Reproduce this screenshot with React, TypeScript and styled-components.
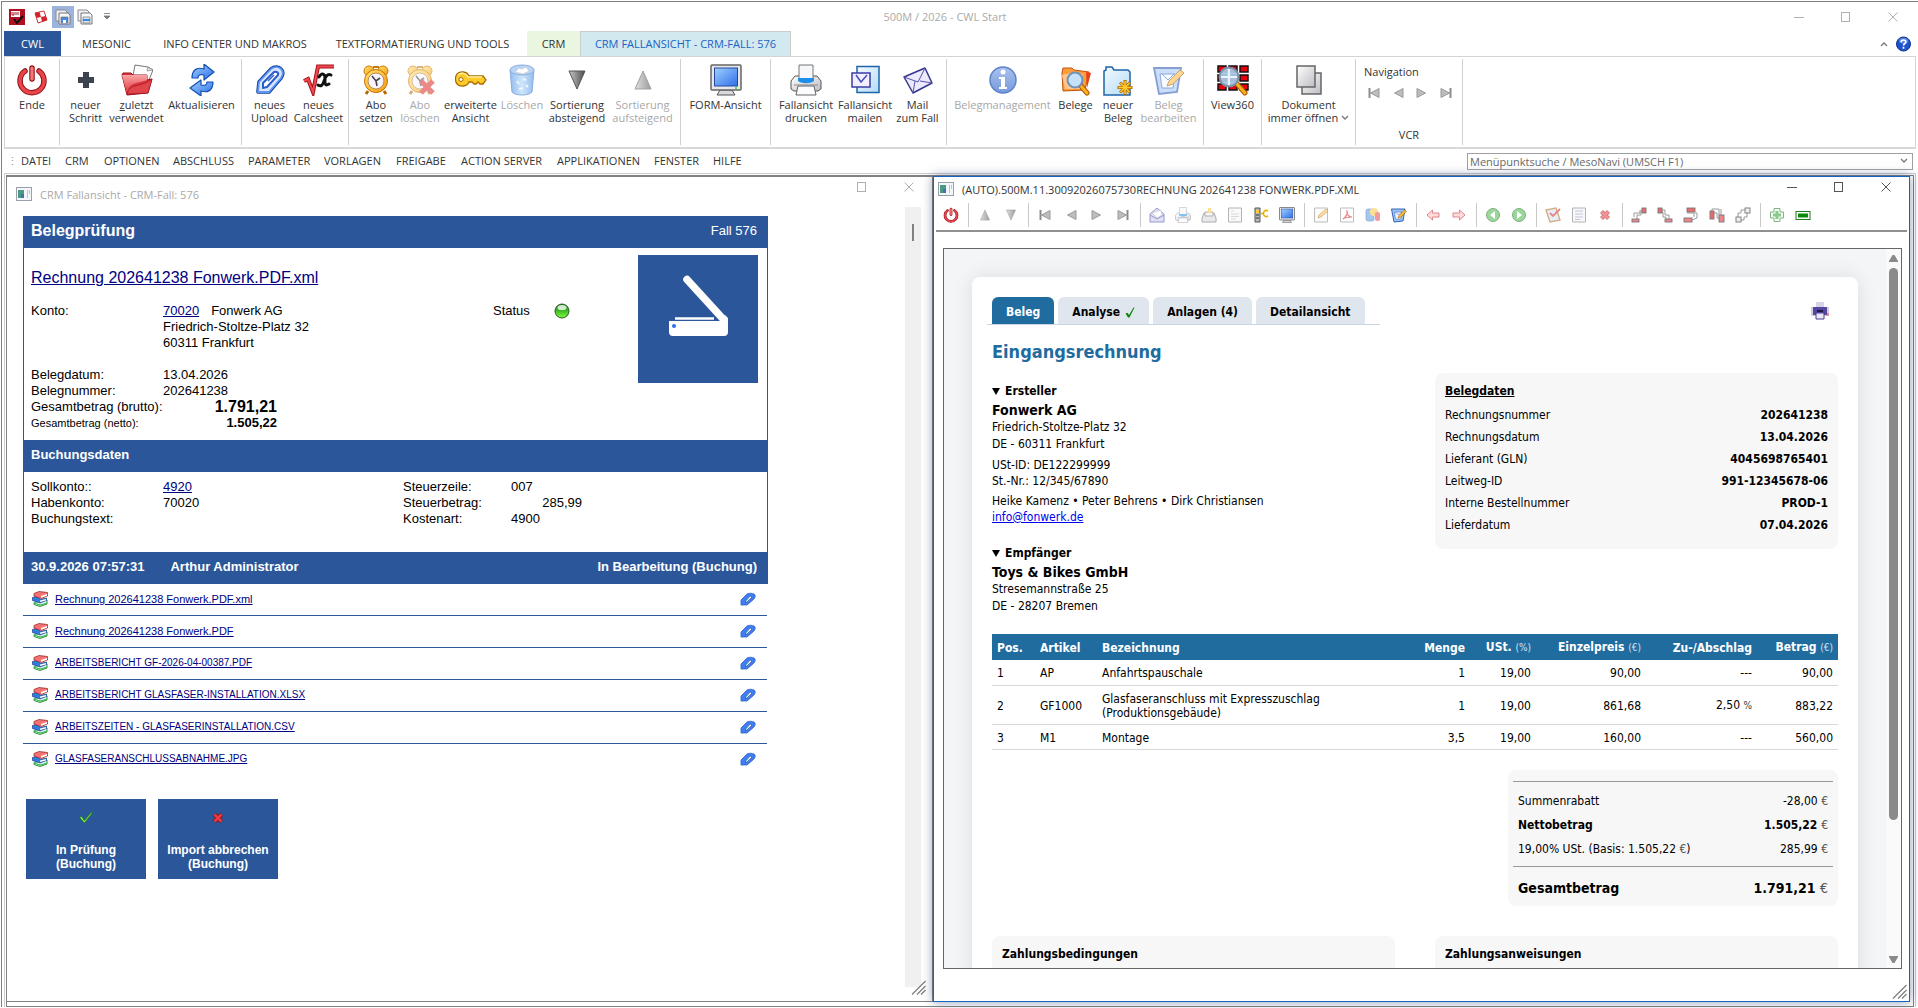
import React from "react";
import styled, { createGlobalStyle, css } from "styled-components";

const BLUE = "#2b579a";
const TEAL = "#206c9f";
const UI = `"Open Sans", "Noto Sans", sans-serif`;
const ARIAL = `"Liberation Sans", Arial, sans-serif`;
const DOC = `"DejaVu Sans Condensed", "DejaVu Sans", Tahoma, sans-serif`;

const Global = createGlobalStyle`
  *, *::before, *::after { box-sizing: border-box; }
  html, body, #root { height: 100%; }
  body { margin: 0; overflow: hidden; background: #fff; font: 11px/14px ${UI}; color: #333; }
  button { font: inherit; color: inherit; border: 0; margin: 0; padding: 0; background: none; }
  svg { display: block; flex: none; }
`;

/* ---------- icons ---------- */

const HiddenDefs = styled.svg`position: absolute;`;
const Defs = () => (
  <HiddenDefs width="0" height="0" aria-hidden="true">
    <defs>
      <linearGradient id="gBlue" x1="0" y1="0" x2="1" y2="1"><stop offset="0" stopColor="#9fd0ff" /><stop offset="1" stopColor="#2f6fe8" /></linearGradient>
      <linearGradient id="gSky" x1="0" y1="0" x2="1" y2="1"><stop offset="0" stopColor="#f4faff" /><stop offset="1" stopColor="#b4dbf8" /></linearGradient>
      <linearGradient id="gRed" x1="0" y1="0" x2="0" y2="1"><stop offset="0" stopColor="#ffb8b8" /><stop offset="1" stopColor="#e0303a" /></linearGradient>
      <linearGradient id="gGrey" x1="0" y1="0" x2="1" y2="1"><stop offset="0" stopColor="#fff" /><stop offset="1" stopColor="#bdbdc4" /></linearGradient>
      <linearGradient id="gDark" x1="0" y1="0" x2="1" y2="0"><stop offset="0" stopColor="#c8c8c8" /><stop offset="1" stopColor="#4a4a4a" /></linearGradient>
      <linearGradient id="gGold" x1="0" y1="0" x2="1" y2="1"><stop offset="0" stopColor="#ffe36a" /><stop offset="1" stopColor="#f59a12" /></linearGradient>
      <linearGradient id="gGreen" x1="0" y1="0" x2="0" y2="1"><stop offset="0" stopColor="#0b7a12" /><stop offset="1" stopColor="#7dff3c" /></linearGradient>
      <linearGradient id="gInfo" x1="0" y1="0" x2="0" y2="1"><stop offset="0" stopColor="#a9c2ee" /><stop offset="1" stopColor="#7799dc" /></linearGradient>
      <linearGradient id="gBin" x1="0" y1="0" x2="1" y2="0"><stop offset="0" stopColor="#3f86e0" /><stop offset=".5" stopColor="#a8d2fb" /><stop offset="1" stopColor="#3f86e0" /></linearGradient>
    </defs>
  </HiddenDefs>
);

type IconProps = { size?: number; box?: number; faded?: boolean; children: React.ReactNode };
const Icon = ({ size = 32, box = 32, faded, children }: IconProps) => (
  <svg width={size} height={size} viewBox={`0 0 ${box} ${box}`} fill="none" opacity={faded ? 0.55 : 1} aria-hidden="true">{children}</svg>
);

const Power = ({ size = 32 }: { size?: number }) => (
  <Icon size={size}>
    <path d="M9 7A12 12 0 1 0 23 7" stroke="#8f1218" strokeWidth="5.500" strokeLinecap="round" />
    <path d="M9 7A12 12 0 1 0 23 7" stroke="#e8444a" strokeWidth="3.500" strokeLinecap="round" />
    <path d="M16 4v11" stroke="#8f1218" strokeWidth="5.500" strokeLinecap="round" />
    <path d="M16 4v11" stroke="#f7777a" strokeWidth="3.200" strokeLinecap="round" />
  </Icon>
);
const Plus = () => <Icon><path d="M13 8h6v5h5v6h-5v5h-6v-5H8v-6h5z" fill="#3d4450" /></Icon>;
const Folder = () => (
  <Icon>
    <path d="M14 1l13 2 5 3-6 15-15-4z" fill="#fdfdfd" stroke="#777" /><path d="M27 3l-1 4 6-1z" fill="#ddd" stroke="#777" strokeWidth=".6" />
    <path d="M1 11l1-2h8l2 2h14v5l5-1-4 14-21 2z" fill="#d8323b" stroke="#9b141c" />
    <path d="M1 11h25v5C15 20 8 18 6 30z" fill="url(#gRed)" opacity=".85" /><path d="M6 30c2-6 4-7 8-8 8-2 12-3 17-7l-4 14z" fill="#e2444c" stroke="#9b141c" strokeWidth=".6" />
  </Icon>
);
const Refresh = () => (
  <Icon>
    <path d="M6 14C6 5 12 3 18 5V0l10 8-10 8v-5c-4-1-6 0-6 3z" fill="url(#gBlue)" stroke="#1450b4" strokeWidth="1.200" strokeLinejoin="round" />
    <path d="M27 18c0 9-6 11-12 9v5L4 24l11-8v5c4 1 6 0 6-3z" fill="url(#gBlue)" stroke="#1450b4" strokeWidth="1.200" strokeLinejoin="round" />
  </Icon>
);
const Clip = () => (
  <Icon>
    <path d="M4 28l1-10L17 5c4-3 8-2 10 0 3 3 2 6 0 9L15 28z" stroke="#173f9e" strokeWidth="3.600" strokeLinejoin="round" />
    <path d="M4 28l1-10L17 5c4-3 8-2 10 0 3 3 2 6 0 9L15 28z" fill="#d6e6ff" stroke="#5b96f4" strokeWidth="1.800" strokeLinejoin="round" />
    <path d="M9 24v-5L20 8c3-1 5 1 4 3L13 23z" fill="#fff" stroke="#2a5ccc" strokeWidth="2" strokeLinejoin="round" /><path d="M14 17l6-6" stroke="#2a5ccc" strokeWidth="1.400" />
  </Icon>
);
const SmallClip = () => (
  <Icon size={16} box={16}><path d="M1 14V9l6-6c2-1 5-1 7 0s1 4 0 5l-7 6z" fill="#3f7ff0" stroke="#2a5fd0" strokeWidth=".8" /><path d="M5 11l5-6 2 1-5 5z" fill="#fff" stroke="#173f9e" strokeWidth=".6" /></Icon>
);
const Root = () => (
  <Icon>
    <path d="M1 17l4-2 5 13L15 2.500h16" stroke="#a4141c" strokeWidth="4" /><path d="M1 17l4-2 5 13L15 2.500h16" stroke="#f04a50" strokeWidth="2" />
    <path d="M16 13c3-5 6-3 6 1s-1 9 4 6M28 11c-4-2-6 3-7 6-1 4-3 6-6 4" stroke="#111" strokeWidth="3" strokeLinecap="round" />
  </Icon>
);
const Clock = ({ cancel }: { cancel?: boolean }) => (
  <Icon faded={cancel}>
    <path d="M8 27l-2 3M24 27l2 3" stroke="#b86a00" strokeWidth="3" />
    <circle cx="9" cy="7" r="5" fill="url(#gGold)" stroke="#c67a08" /><circle cx="23" cy="7" r="5" fill="url(#gGold)" stroke="#c67a08" />
    <path d="M13 3h6" stroke="#c67a08" strokeWidth="2" /><circle cx="16" cy="17" r="11.500" fill="url(#gGold)" stroke="#c86f04" />
    <circle cx="16" cy="17" r="8" fill="#f6f5ff" stroke="#b98a50" /><path d="M12 12l4 5 4-3M16 17l1 5" stroke="#444" strokeWidth="1.600" />
    {cancel && <path d="M17 17l12 12M29 17L17 29" stroke="#dc2a2a" strokeWidth="5" />}
  </Icon>
);
const Key = () => (
  <Icon>
    <path d="M2 10c3-3 10-3 12 2h14l3 4-3 4h-3l-2-2-2 2h-2l-2-2h-3c-2 5-9 5-12 2-2-3-2-7 0-10z" fill="#ffc928" stroke="#a86d00" strokeWidth="1.300" />
    <path d="M3 11c3-3 8-2 10 2h14" stroke="#fff2a0" strokeWidth="1.400" /><circle cx="6" cy="15.500" r="2" fill="#fff" stroke="#a86d00" />
  </Icon>
);
const Bin = () => (
  <Icon faded>
    <path d="M4 6l2 22c3 4 17 4 20 0l2-22z" fill="url(#gBin)" stroke="#2c6cc0" /><ellipse cx="16" cy="6" rx="12" ry="5" fill="#7fb4f2" stroke="#2c6cc0" />
    <path d="M9 8l4-4 3 1 4-2 3 4-6 3z" fill="#fff" stroke="#999" strokeWidth=".7" /><path d="M11 17l2 3M17 15l3 1M13 25l4-1M20 21l2 2" stroke="#e4f1ff" strokeWidth="2" />
  </Icon>
);
const Tri = ({ up, faded, size = 32 }: { up?: boolean; faded?: boolean; size?: number }) => (
  <Icon size={size} faded={faded}><path d={up ? "M16 7l8 18H8z" : "M8 7h16l-8 18z"} fill="url(#gDark)" stroke="#555" strokeLinejoin="round" /></Icon>
);
const Monitor = ({ size = 32 }: { size?: number }) => (
  <Icon size={size}>
    <path d="M10 26h12l3 5H7z" fill="#d8d8de" stroke="#555" /><rect x="1" y="1" width="30" height="25" rx="1" fill="#e8e8ec" stroke="#666" strokeWidth="1.500" />
    <rect x="4.500" y="4" width="23" height="18" fill="url(#gBlue)" stroke="#24489c" /><circle cx="26" cy="24" r="1" fill="#3c3" />
  </Icon>
);
const Printer = ({ size = 32, faded }: { size?: number; faded?: boolean }) => (
  <Icon size={size} faded={faded}>
    <path d="M5 12h22l4 5v8l-3 2H4l-3-2v-8z" fill="url(#gGrey)" stroke="#555" /><path d="M9 1h14v14H9z" fill="#f5f7fb" stroke="#777" />
    <path d="M8 14h16v3c-4 3-12 3-16 0z" fill="#1e8fe8" /><path d="M8 22h16l2 9H6z" fill="#fafaff" stroke="#666" /><path d="M4 21h24" stroke="#888" />
  </Icon>
);
const MailDoc = () => (
  <Icon>
    <path d="M8 2.500h22v26H8z" fill="url(#gSky)" stroke="#1d64a8" strokeWidth="1.500" /><path d="M3 9h18v14H3z" fill="#f2f0ff" stroke="#3a3ca8" strokeWidth="1.500" />
    <path d="M7 11l5 7 6-7" stroke="#4a4cb8" strokeWidth="1.500" />
  </Icon>
);
const Mail = () => (
  <Icon>
    <path d="M2 13L23 4l7 15-19 10z" fill="#eceafc" stroke="#35378e" strokeWidth="1.500" strokeLinejoin="round" />
    <path d="M2 13l14 5 7-14M11 29l2-12M30 19l-12-2" stroke="#5355b0" />
  </Icon>
);
const Info = () => (
  <Icon><circle cx="16" cy="16" r="13" fill="url(#gInfo)" stroke="#5f82c8" strokeWidth="1.500" /><circle cx="16" cy="8" r="2.500" fill="#fff" /><path d="M12 13h6v10h2v2h-8v-2h2v-8h-2z" fill="#fff" /></Icon>
);
const FolderSearch = () => (
  <Icon>
    <path d="M2 9l1-5h9l2 2 15 2-4 18-22 1z" fill="#ff9c3c" stroke="#c2540a" /><path d="M26 8l5 1-4 15z" fill="#e8401c" /><path d="M2 11c6-2 14-2 21-1l-2 15H5z" fill="#ffc58a" />
    <path d="M21 22l6 7" stroke="#a85a00" strokeWidth="5" strokeLinecap="round" /><path d="M21 22l6 7" stroke="#ffb020" strokeWidth="3" strokeLinecap="round" />
    <circle cx="15" cy="16" r="7.500" fill="#c4e2fb" stroke="#6f93b8" strokeWidth="2" />
  </Icon>
);
const DocNew = () => (
  <Icon>
    <path d="M2 7l2-1V3h6l2 3h14l2 2v23H2z" fill="url(#gSky)" stroke="#1d64a8" strokeWidth="1.500" />
    <path d="M23 16v15M15.500 23.500h15M18 18.500l10 10M28 18.500l-10 10" stroke="#b86f00" strokeWidth="3" /><path d="M23 17v13M16.500 23.500h13M18.500 19l9 9M27.500 19l-9 9" stroke="#ffc92e" strokeWidth="1.500" />
  </Icon>
);
const DocEdit = ({ size = 32, faded = true }: { size?: number; faded?: boolean }) => (
  <Icon size={size} faded={faded}>
    <path d="M1 4h27l-4 24-18 2z" fill="#9fc3f5" stroke="#2552b0" strokeWidth="1.800" /><path d="M7 10h15l-2 14H9z" fill="#f2f6ff" stroke="#2f62c4" /><path d="M9 10l6 6 6-6" stroke="#2f62c4" />
    <path d="M14 22l2-5L27 6l4 3-11 11z" fill="#ffb636" stroke="#9a5c00" />
  </Icon>
);
const View360 = () => (
  <Icon>
    {[0, 1, 2].map((r) => [0, 1, 2].map((c) => <rect key={`${r}${c}`} x={1 + c * 11} y={2 + r * 9} width="8" height="6" fill="#e8000c" stroke="#111" strokeWidth="1.500" />))}
    <path d="M20 20l8 9" stroke="#a85a00" strokeWidth="5" strokeLinecap="round" /><path d="M20 20l8 9" stroke="#ffb020" strokeWidth="3" strokeLinecap="round" />
    <circle cx="12" cy="13" r="9.500" fill="#a9c9e6" fillOpacity=".93" stroke="#7d8fa8" strokeWidth="2" /><path d="M12 5v16M4 13h16" stroke="#e8f4ff" strokeWidth="2" />
  </Icon>
);
const Docs = () => (
  <Icon><path d="M9 9h19v21H9z" fill="url(#gGrey)" stroke="#666" strokeWidth="1.500" /><path d="M4 2h18v21H4z" fill="url(#gGrey)" stroke="#666" strokeWidth="1.500" /></Icon>
);
const Vcr = ({ kind }: { kind: "first" | "prev" | "next" | "last" }) => {
  const flip = kind === "next" || kind === "last";
  const bar = kind === "first" || kind === "last";
  return (
    <Icon size={16} box={16}>
      <g transform={flip ? "translate(16 0) scale(-1 1)" : undefined}>
        <path d="M13 3.500v9L4.500 8z" fill="#bdbdbd" stroke="#999" />{bar && <path d="M3.500 3v10" stroke="#8c8c8c" strokeWidth="2" />}
      </g>
    </Icon>
  );
};
const Books = () => (
  <Icon size={16} box={16}>
    <path d="M2 12l4-2 9-1v4l-7 2.500-6-2z" fill="#f2fdf2" stroke="#1d7a34" strokeWidth=".9" /><path d="M2 12l6 2 7-2" stroke="#35c04e" strokeWidth="1.300" />
    <path d="M.5 6.500l4-1 4 3 6-1.500v2.500L8 12 .5 9.500z" fill="#2f7be0" stroke="#123f86" strokeWidth=".7" /><path d="M8 9.500l6-1.500v1.500l-6 1.500z" fill="#fff" />
    <path d="M2 2.500L7 .5l8.500 1v3.500L9 7.500 2 5z" fill="#f47474" stroke="#8e1d22" strokeWidth=".7" /><path d="M9 5l6-2v1.800L9 6.800z" fill="#fff" />
  </Icon>
);
const Tick = () => <Icon size={16} box={16}><path d="M1.500 7.500l2-1 3 4L13 2.500h1.500L6.500 13z" fill="#8ff05a" stroke="#1d7a12" strokeWidth=".8" /></Icon>;
const Cross = ({ faded }: { faded?: boolean }) => (
  <Icon size={16} box={16} faded={faded}><path d="M4.500 4.500l7 7M11.500 4.500l-7 7" stroke="#8c0d12" strokeWidth="4.200" /><path d="M4.500 4.500l7 7M11.500 4.500l-7 7" stroke="#ea3a40" strokeWidth="2.600" /></Icon>
);
const Ball = () => (
  <Icon size={16} box={16}><circle cx="8" cy="8" r="7" fill="url(#gGreen)" stroke="#2a5a28" /><ellipse cx="8" cy="4.500" rx="4.500" ry="2.600" fill="#fff" opacity=".8" /></Icon>
);
const Scanner = () => (
  <svg width="120" height="128" viewBox="0 0 120 128" aria-hidden="true">
    <path d="M49 24.500L86 65" stroke="#fff" strokeWidth="7.500" strokeLinecap="round" />
    <path d="M37 63.500h39" stroke="#fff" strokeWidth="2.500" /><path d="M31 66h52l4-6 3 3v14a4 4 0 0 1-4 4H35a4 4 0 0 1-4-4z" fill="#fff" /><circle cx="36" cy="71" r="2" fill="#2b6ff0" />
  </svg>
);
const WinIcon = () => (
  <Icon size={16} box={16}><rect x=".5" y="1.500" width="15" height="13" fill="#f4f6fb" stroke="#9aa0a8" /><path d="M2 4h6v8H2z" fill="#4c9a86" /><path d="M5 8h3v4H5z" fill="#3f74b0" /><path d="M11 4h1v8h-1zM13 4h1v4h-1z" fill="#b9c4d4" /></Icon>
);
const Help = () => (
  <svg width="15" height="16" viewBox="0 0 16 16" fill="none" aria-hidden="true"><circle cx="8" cy="8" r="7.500" fill="#1d52cc" stroke="#0d2f8a" /><ellipse cx="8" cy="4.500" rx="5" ry="3" fill="#7aa6ff" opacity=".6" /><path d="M5.500 6c0-3 5-3 5 0 0 1.500-2.500 1.500-2.500 3.500M8 11v2" stroke="#fff" strokeWidth="1.800" /></svg>
);
const DocPrinter = () => (
  <Icon size={18} box={18}><path d="M0 5h18v9H0z" fill="#cfd0dc" /><path d="M2 5h14v8H2z" fill="#5646a0" /><path d="M5 0h8v5H5z" fill="#d9d3ea" /><path d="M6 8h6v2H6z" fill="#1d1a44" /><path d="M5 11h8v6H5z" fill="#ece9f6" stroke="#4a3c94" /><path d="M16 11h2v3h-2z" fill="#e88" /></Icon>
);
const AppLogo = () => (
  <Icon size={16} box={16}><rect width="16" height="16" fill="#b01020" /><path d="M2 2h9v6H2z" fill="#fff" /><path d="M3 3v3h2V3M7 3v3M9 3v3" stroke="#b01020" /><path d="M5 10l3 4 6-7" stroke="#111" strokeWidth="2" /></Icon>
);
const CheckerLogo = () => (
  <Icon size={16} box={16}><path d="M2 4l9-2 3 9-9 3z" fill="#fff" stroke="#c33" /><path d="M2 4l4.500-1 1.500 5-4.500 1zM8 8l4.500-1 1.500 4-5 2z" fill="#d8232c" /></Icon>
);
const SaveDoc = ({ print }: { print?: boolean }) => (
  <Icon size={16} box={16}><path d="M1 1h9l2 2v9H1z" fill="#f0f0f4" stroke="#8a8a90" /><path d="M4 4h9l2 2v9H4z" fill="#f8f8fb" stroke="#77777d" /><path d="M6 8h7v6H6z" fill={print ? "#e4e4e8" : "#4a86e0"} stroke="#777" strokeWidth=".7" /><path d={print ? "M6 10h7v2H6z" : "M8 11h3v3H8z"} fill={print ? "#2f8fe0" : "#fff"} /></Icon>
);
const S = ({ children, faded = true }: { children: React.ReactNode; faded?: boolean }) => <Icon size={16} box={16} faded={faded}>{children}</Icon>;
const Arrow = ({ right }: { right?: boolean }) => (
  <S><g transform={right ? "translate(16 0) scale(-1 1)" : undefined}><path d="M2 8l5.500-5v3H14v4H7.500v3z" fill="#ffc0c0" stroke="#c8202a" /></g></S>
);
const GreenNav = ({ right }: { right?: boolean }) => (
  <S><circle cx="8" cy="8" r="6.500" fill="#48b848" stroke="#1d6a1d" /><path d={right ? "M6 4l5 4-5 4z" : "M10 4L5 8l5 4z"} fill="#fff" /></S>
);
const treeParts = [
  { boxes: [[11, 1, 4, 5], [1, 12, 7, 3]], line: "M3 10V6h6V3M6 12V8h4V3h1" },
  { boxes: [[1, 1, 4, 5], [8, 12, 7, 3]], line: "M5 3h3v5h4v4M5 5h1v5h3v2" },
  { boxes: [[4, 1, 8, 4], [1, 11, 8, 4]], line: "M4 6h7v4M9 13l5-2V6h-2" },
  { boxes: [[1, 4, 4, 8], [10, 8, 5, 7]], line: "M3 4V2h7v6M5 6h3v5h2M12 2v6" },
  { boxes: [[10, 1, 5, 5], [1, 10, 5, 5]], line: "M10 3H6v3H3v4M6 13h3v-3h3V6" },
];
const Tree = ({ v }: { v: number }) => (
  <Icon size={16} box={16}>
    <path d={treeParts[v].line} stroke="#999" />
    {treeParts[v].boxes.map(([x, y, w, h], i) => <rect key={i} x={x} y={y} width={w} height={h} fill={v === 4 ? "#eee" : i ? "#f0868a" : "#ee6a70"} stroke="#777" strokeWidth=".9" />)}
  </Icon>
);

/* ---------- shell ---------- */

const Shell = styled.div`
  height: 100vh; display: flex; flex-direction: column; padding: 1px 0 1px 1px; background: #fff;
`;
const Frame = styled.div`
  flex: 1; min-height: 0; display: flex; flex-direction: column; padding: 0 2px;
  border-top: 1px solid #808080; border-left: 1px solid #808080;
`;
const TitleBar = styled.header`
  height: 29px; display: grid; grid-template-columns: 1fr auto 1fr; align-items: center; color: #aaa;
`;
const AppTitle = styled.span`margin-right: 30px;`;
const Quick = styled.div`display: flex; align-items: center; height: 24px;`;
const QuickButton = styled.button<{ $on?: boolean; $wide?: boolean }>`
  width: ${(p) => (p.$wide ? 26 : 22)}px; height: 22px; display: grid; place-items: center; background: ${(p) => (p.$on ? "#9bb3dd" : "none")};
`;
const Caption = styled.div<{ $active?: boolean }>`
  justify-self: end; display: flex; color: ${(p) => (p.$active ? "#555" : "#b0b0b0")};
  button { width: 47px; height: 20px; display: grid; place-items: center; }
`;
const CaptionButtons = ({ active, noMin }: { active?: boolean; noMin?: boolean }) => (
  <Caption $active={active}>
    {!noMin && <button aria-label="Minimieren"><svg width="10" height="10"><path d="M0 5.500h10" stroke="currentColor" /></svg></button>}
    <button aria-label="Maximieren"><svg width="10" height="10"><rect x=".5" y=".5" width="8" height="9" fill="none" stroke="currentColor" /></svg></button>
    <button aria-label="Schließen"><svg width="10" height="10"><path d="M.5.5l9 9M9.500.5l-9 9" stroke="currentColor" /></svg></button>
  </Caption>
);

const TabRow = styled.nav`height: 25px; display: flex; align-items: stretch;`;
const RibbonTab = styled.button<{ $w: number; $tone?: "file" | "crm" | "active" }>`
  width: ${(p) => p.$w}px; white-space: nowrap; text-align: center;
  ${(p) => p.$tone === "file" && css`background: ${BLUE}; color: #fff;`}
  ${(p) => p.$tone === "crm" && css`background: #e9f7e0;`}
  ${(p) => p.$tone === "active" && css`background: #d2e9f0; color: #1a62c4; border: 1px solid #ccc; border-bottom: 0;`}
`;
const TabTools = styled.div`margin-left: auto; display: flex; align-items: center; gap: 8px; padding-right: 5px;`;

const Ribbon = styled.div`
  height: 93px; display: flex; padding-top: 2px; border: 1px solid #d4d4d4; border-bottom: 2px solid #d8d8d8;
`;
const Group = styled.div<{ $w: number }>`
  width: ${(p) => p.$w}px; height: 86px; display: flex; justify-content: center; border-right: 1px solid #d0d0d0;
`;
const Tool = styled.button<{ $w: number; $off?: boolean }>`
  width: ${(p) => p.$w}px; display: flex; flex-direction: column; align-items: center; padding-top: 5px;
  line-height: 13px; white-space: nowrap; color: ${(p) => (p.$off ? "#a8a8a8" : "#333")};
`;
const ToolLabel = styled.span`margin-top: 2px; display: flex; flex-direction: column; align-items: center;`;
const DropLine = styled.span`display: flex; align-items: center; gap: 3px;`;
const VcrGroup = styled.div`
  width: 107px; height: 86px; padding: 6px 8px 3px; border-right: 1px solid #d0d0d0; display: flex; flex-direction: column;
`;
const VcrRow = styled.div`display: flex; gap: 8px; margin-top: 6px; padding-left: 2px;`;
const VcrTitle = styled.div`margin-top: auto; text-align: center; line-height: 14px;`;

type ToolDef = { w: number; l1: string; l2?: string; icon: React.ReactNode; off?: boolean; drop?: boolean; key1?: boolean };
const groups: { w: number; tools: ToolDef[] }[] = [
  { w: 55, tools: [{ w: 52, l1: "Ende", icon: <Power /> }] },
  { w: 182, tools: [
    { w: 45, l1: "neuer", l2: "Schritt", icon: <Plus /> },
    { w: 57, l1: "zuletzt", l2: "verwendet", icon: <Folder />, key1: true },
    { w: 73, l1: "Aktualisieren", icon: <Refresh /> }] },
  { w: 107, tools: [{ w: 47, l1: "neues", l2: "Upload", icon: <Clip /> }, { w: 51, l1: "neues", l2: "Calcsheet", icon: <Root /> }] },
  { w: 332, tools: [
    { w: 45, l1: "Abo", l2: "setzen", icon: <Clock /> },
    { w: 43, l1: "Abo", l2: "löschen", icon: <Clock cancel />, off: true },
    { w: 58, l1: "erweiterte", l2: "Ansicht", icon: <Key /> },
    { w: 45, l1: "Löschen", icon: <Bin />, off: true },
    { w: 65, l1: "Sortierung", l2: "absteigend", icon: <Tri /> },
    { w: 66, l1: "Sortierung", l2: "aufsteigend", icon: <Tri up faded />, off: true }] },
  { w: 90, tools: [{ w: 80, l1: "FORM-Ansicht", icon: <Monitor /> }] },
  { w: 176, tools: [
    { w: 62, l1: "Fallansicht", l2: "drucken", icon: <Printer /> },
    { w: 56, l1: "Fallansicht", l2: "mailen", icon: <MailDoc /> },
    { w: 49, l1: "Mail", l2: "zum Fall", icon: <Mail /> }] },
  { w: 257, tools: [
    { w: 102, l1: "Belegmanagement", icon: <Info />, off: true },
    { w: 44, l1: "Belege", icon: <FolderSearch /> },
    { w: 41, l1: "neuer", l2: "Beleg", icon: <DocNew /> },
    { w: 60, l1: "Beleg", l2: "bearbeiten", icon: <DocEdit />, off: true }] },
  { w: 58, tools: [{ w: 50, l1: "View360", icon: <View360 /> }] },
  { w: 94, tools: [{ w: 88, l1: "Dokument", l2: "immer öffnen", icon: <Docs />, drop: true }] },
];

const MenuBar = styled.div`height: 24px; display: flex; align-items: center; padding-right: 3px;`;
const Grip = styled.span`width: 17px; padding-left: 3px; color: #999;`;
const MenuItem = styled.button<{ $w: number }>`width: ${(p) => p.$w}px; text-align: left; white-space: nowrap;`;
const Search = styled.div`
  margin-left: auto; width: 446px; height: 17px; display: flex; align-items: center; border: 1px solid #a0a0a0; padding-right: 4px;
  input { flex: 1; min-width: 0; border: 0; outline: 0; padding: 0 2px; font: 11px/15px ${UI}; height: 15px; background: none; }
  input::placeholder { color: #6a6a6a; opacity: 1; }
`;
const Chevron = ({ up }: { up?: boolean }) => (
  <svg width="8" height="6" viewBox="0 0 8 6" fill="none" aria-hidden="true"><path d={up ? "M1 5l3-3 3 3" : "M1 1l3 3 3-3"} stroke="#777" strokeWidth="1.300" /></svg>
);

const menus: [string, number][] = [["DATEI", 44], ["CRM", 39], ["OPTIONEN", 69], ["ABSCHLUSS", 75], ["PARAMETER", 76], ["VORLAGEN", 72], ["FREIGABE", 65], ["ACTION SERVER", 96], ["APPLIKATIONEN", 97], ["FENSTER", 59], ["HILFE", 40]];

/* ---------- MDI area ---------- */

const MdiOuter = styled.div`
  flex: 1; min-height: 0; display: flex; padding: 1px 1px 0; border: 1px solid #ccc; border-bottom: 0;
`;
const Mdi = styled.main`
  flex: 1; min-width: 0; display: grid; grid-template-columns: minmax(0, 926fr) minmax(0, 977fr); grid-template-rows: minmax(0, 1fr);
  border: 1px solid #808080; padding: 0 3px 4px 0;
`;
const Win = styled.section<{ $active?: boolean }>`
  display: flex; flex-direction: column; min-width: 0; background: #fff; position: relative;
  ${(p) => p.$active
    ? css`border: 1px solid #1465c0; box-shadow: 0 0 10px rgba(50, 70, 120, 0.55);`
    : css`border: solid #808080; border-width: 1px 1px 1px 0;`}
`;
const WinTitle = styled.div<{ $active?: boolean }>`
  height: ${(p) => (p.$active ? 25 : 30)}px; padding-left: ${(p) => (p.$active ? 4 : 9)}px;
  display: flex; align-items: flex-start; gap: 8px; color: ${(p) => (p.$active ? "#333" : "#aaa")};
  h2 { margin: ${(p) => (p.$active ? 5 : 10)}px 0 0; font: 400 11px/16px ${UI}; white-space: nowrap; }
  & > svg { margin-top: ${(p) => (p.$active ? 4 : 9)}px; }
`;
const Spacer = styled.div`flex: 1;`;
const Sizer = styled.div<{ $inset: number }>`
  position: absolute; right: ${(p) => p.$inset}px; bottom: ${(p) => p.$inset}px;
`;
const SizeGrip = ({ inset }: { inset: number }) => <Sizer $inset={inset}><svg width="15" height="15" aria-hidden="true"><path d="M1 14.500L14.500 1M6 14.500L14.500 6M10 14.500l4.500-4.500" stroke="#808080" strokeWidth="1.300" /></svg></Sizer>;

const CaseBody = styled.div`flex: 1; min-height: 0; display: flex; padding: 0 11px 14px 16px; font: 13px/16px ${ARIAL}; color: #000;`;
const CaseScroll = styled.div`width: 16px; background: #f0f0f0; padding: 17px 7px 0;`;
const Thumb = styled.div`width: 2px; height: 17px; background: #808080;`;
const CaseMain = styled.div`flex: 1; min-width: 0; padding-top: 9px;`;
const CaseCard = styled.div`max-width: 745px; border: solid ${BLUE}; border-width: 0 1px;`;
const Bar = styled.div`
  height: 32px; padding: 0 10px 2px 7px; display: flex; align-items: center; gap: 26px; background: ${BLUE}; color: #fff; font-weight: 700;
  h1 { margin: 0; font-size: 16px; } h3 { margin: 0; font-size: 13px; }
  span:last-child { margin-left: auto; }
`;
const Plain = styled.span`font-weight: 400;`;
const Section = styled.div`display: flex; padding: 7px 9px 9px 7px;`;
const Facts = styled.div`flex: 1; min-width: 0;`;
const CaseLink = styled.a<{ $size?: number }>`color: #000080; font-size: ${(p) => p.$size || 13}px;`;
const Headline = styled.div`padding-top: 8px; margin-bottom: 10px; font-size: 16px; line-height: 30px;`;
const FactRow = styled.div<{ $small?: boolean }>`
  display: grid; grid-template-columns: 132px 330px auto; min-height: 16px; white-space: nowrap;
  & > :first-child { font-size: ${(p) => (p.$small ? 11 : 13)}px; }
`;
const Amount = styled.b<{ $size: number }>`width: 114px; text-align: right; font-size: ${(p) => p.$size}px;`;
const Account = styled.div`a { margin-right: 12px; }`;
const Status = styled.div`display: flex; gap: 24px;`;
const Gap = styled.div`height: 16px;`;
const Tile = styled.div`width: 120px; height: 128px; background: ${BLUE};`;
const Booking = styled.div`
  height: 80px; padding: 7px; display: grid; grid-template-columns: 132px 240px 108px 71px auto; grid-auto-rows: 16px; align-content: start;
`;
const Num = styled.div`text-align: right;`;
const Files = styled.ul`max-width: 744px; margin: 0; padding: 0; list-style: none;`;
const FileRow = styled.li`
  height: 32px; display: flex; align-items: center; gap: 7px; padding: 0 11px 2px 9px; border-bottom: 1px solid ${BLUE};
  &:last-child { border-bottom: 0; }
  button { margin-left: auto; }
`;
const Actions = styled.div`display: flex; gap: 12px; margin: 23px 0 0 3px;`;
const Action = styled.button`
  width: 120px; height: 80px; background: ${BLUE}; color: #fff; font: 700 12px/14px ${ARIAL};
  display: flex; flex-direction: column; align-items: center; gap: 17px; padding-top: 11px;
`;

/* ---------- document window ---------- */

const Toolbar = styled.div`height: 30px; margin: 0 2px; padding: 0 2px 2px; display: flex; align-items: center; border-bottom: 2px solid #909090;`;
const TB = styled.button`width: 26px; height: 24px; display: grid; place-items: center;`;
const Sep = styled.i`width: 8px; height: 24px; display: flex; justify-content: center; &::before { content: ""; width: 1px; background: #c8c8c8; }`;
const Viewer = styled.div`flex: 1; min-height: 0; margin: 16px 7px 32px 9px; border: 1px solid #666; display: flex; background: #f4f5f7; overflow: hidden;`;
const Scroller = styled.div`
  width: 15px; background: #fafafa; display: flex; flex-direction: column; align-items: center; padding: 5px 0 4px; color: #8a8a8a;
`;
const Track = styled.div`flex: 1; width: 9px; margin: 6px 0;`;
const TrackThumb = styled.div`height: 81%; border-radius: 5px; background: #8a8a8a;`;
const Page = styled.div`flex: 1; min-width: 0; padding: 28px 28px 0; overflow: hidden; font: 12px/16px ${DOC}; color: #000;`;
const Sheet = styled.article`min-height: 1100px; padding: 20px; border-radius: 8px; background: #fff; box-shadow: 0 0 20px rgba(0, 0, 0, 0.1);`;
const SheetTop = styled.div`display: flex; justify-content: space-between; align-items: center;`;
const DocTabs = styled.div`display: flex; gap: 4px; margin-left: -5px; padding: 0 15px 0 5px; border-bottom: 1px solid #ccd3e0;`;
const DocTab = styled.button<{ $on?: boolean }>`
  height: 27px; padding: 3px 14px 0; border-radius: 6px 6px 0 0; font: 700 12px/16px ${DOC}; display: flex; align-items: center; gap: 5px;
  background: ${(p) => (p.$on ? TEAL : "#e0e6ee")}; color: ${(p) => (p.$on ? "#fff" : "#000")};
`;
const PrintButton = styled.button`margin-right: 9px;`;
const DocTitle = styled.h1`margin: 15px 0 9px; font: 700 18px/24px ${DOC}; color: ${TEAL};`;
const Two = styled.div`display: grid; grid-template-columns: 1fr 1fr; gap: 40px; align-items: start;`;
const Parties = styled.div`padding-top: 8px;`;
const Party = styled.details`
  & + & { margin-top: 18px; }
  summary { list-style: none; font: 700 12px/20px ${DOC}; display: flex; align-items: center; gap: 5px; }
  address { font-style: normal; line-height: 17px; }
  p { margin: 4px 0 0; }
`;
const PartyName = styled.div`font: 700 14px/18px ${DOC};`;
const Box = styled.section`
  border-radius: 8px; background: #f7f7f7; padding: 8px 10px 13px;
  h4 { margin: 0 0 3px; font: 700 12px/20px ${DOC}; }
`;
const Under = styled.h4`text-decoration: underline;`;
const Pair = styled.div<{ $h?: number; $bold?: boolean; $size?: number }>`
  display: flex; justify-content: space-between; line-height: ${(p) => p.$h || 22}px; font-size: ${(p) => p.$size || 12}px; font-weight: ${(p) => (p.$bold ? 700 : 400)};
`;
const Euro = styled.span`color: #555; font-weight: 400;`;
const Items = styled.table`
  width: 100%; margin-top: 19px; border-collapse: collapse; table-layout: fixed; line-height: 14px;
  th { height: 26px; background: ${TEAL}; color: #fff; font-size: 12px; text-align: left; padding: 1px 5px 0; white-space: nowrap; }
  td { height: 25px; padding: 6px 5px 4px; border-bottom: 1px solid #d8d8d8; }
  th:nth-child(n + 4), td:nth-child(n + 4) { text-align: right; }
  small { font-size: 10px; font-weight: 400; opacity: 0.8; }
`;
const Narrow = styled.div`max-width: 280px;`;
const Totals = styled.div`width: 330px; margin: 20px 0 30px auto; padding: 11px 5px 6px; border-radius: 8px; background: #f7f7f7; & > div { padding: 0 5px; }`;
const Rule = styled.hr<{ $b: number; $t?: number }>`border: 0; height: 1px; background: #999; margin: ${(p) => p.$t || 0}px 0 ${(p) => p.$b}px;`;

const files: { name: string; size: number }[] = [
  { name: "Rechnung 202641238 Fonwerk.PDF.xml", size: 11 },
  { name: "Rechnung 202641238 Fonwerk.PDF", size: 11 },
  { name: "ARBEITSBERICHT GF-2026-04-00387.PDF", size: 10 },
  { name: "ARBEITSBERICHT GLASFASER-INSTALLATION.XLSX", size: 10 },
  { name: "ARBEITSZEITEN - GLASFASERINSTALLATION.CSV", size: 10 },
  { name: "GLASFASERANSCHLUSSABNAHME.JPG", size: 10 },
];
const data: [string, string][] = [["Rechnungsnummer", "202641238"], ["Rechnungsdatum", "13.04.2026"], ["Lieferant (GLN)", "4045698765401"], ["Leitweg-ID", "991-12345678-06"], ["Interne Bestellnummer", "PROD-1"], ["Lieferdatum", "07.04.2026"]];
const Col = styled.col<{ $w?: number }>`${(p) => p.$w && css`width: ${p.$w}px;`}`;
const cols = [43, 62, 0, 62, 66, 110, 111, 81];

const toolbar: ([string, React.ReactNode] | null)[] = [
  ["Ende", <Power size={16} />], null,
  ["Aufwärts", <Tri up faded size={18} />], ["Abwärts", <Tri faded size={18} />], null,
  ["Erster", <Vcr kind="first" />], ["Zurück", <Vcr kind="prev" />], ["Weiter", <Vcr kind="next" />], ["Letzter", <Vcr kind="last" />], null,
  ["Mail", <S><path d="M1 7l7-6 7 6v8H1z" fill="#c8c8f0" stroke="#4446a0" /><path d="M3 6l9-3 1 5-5 3z" fill="#fff" stroke="#888" strokeWidth=".6" /><path d="M1 8l7 4 7-4" stroke="#4446a0" /></S>],
  ["Drucken", <Printer size={16} faded />],
  ["Export", <S><path d="M3 6h10l2 5v4H1v-4z" fill="#d8d8e0" stroke="#666" /><path d="M4 5h8v4H4z" fill="#eee" stroke="#777" /><path d="M7 1h3v5H7z" fill="#ffc23a" /></S>],
  ["Vorschau", <S><path d="M1.500 1h13v14h-13z" fill="#f6f6f6" stroke="#777" /><path d="M4 4h3M4 7h8M4 9.500h8M4 12h5" stroke="#bbb" /></S>],
  ["Filter", <S faded={false}><path d="M2 1h5v14H2z" fill="#bbb" stroke="#555" /><path d="M3 3h3v3H3z" fill="#fc3" /><path d="M3 8h3M3 11h3" stroke="#333" /><path d="M15 4a3 3 0 1 0 0 5M8 6.500h3" stroke="#e8b400" strokeWidth="1.600" /></S>],
  ["Bildschirm", <Monitor size={16} />], null,
  ["Bearbeiten", <S><path d="M1.500 1h13v14h-13z" fill="#f8f8f8" stroke="#888" /><path d="M5 11l1-3 7-6 2 2-7 6z" fill="#ffbe50" stroke="#a86400" strokeWidth=".7" /></S>],
  ["PDF", <S><path d="M1.500 1h13v14h-13z" fill="#fff" stroke="#888" /><path d="M4 12c3-2 5-6 4-8-1 3 2 6 5 6-3 0-7 0-9 2z" stroke="#d41c1c" strokeWidth="1.200" /></S>],
  ["Diagramm", <S><rect x="1" y="2" width="8" height="12" rx="2" fill="#5a9be6" stroke="#2560b0" strokeWidth=".7" /><circle cx="9" cy="5" r="4" fill="#ffc83a" /><rect x="10" y="5" width="5" height="9" rx="2" fill="#e8484e" /></S>],
  ["Notiz", <DocEdit size={16} faded={false} />], null,
  ["Zurück", <Arrow />], ["Vor", <Arrow right />], null,
  ["Voriges", <GreenNav />], ["Nächstes", <GreenNav right />], null,
  ["Prüfen", <S><path d="M1 3l10-2 4 12-10 2z" fill="#cfe2fb" stroke="#b86a20" strokeWidth="1.400" /><path d="M5 6l3 3 7-7" stroke="#d82020" strokeWidth="1.800" /></S>],
  ["Protokoll", <S><path d="M1.500 1h13v14h-13z" fill="#f2f4fa" stroke="#777" /><path d="M4 4h8M4 7h8M4 10h8M4 12.500h5" stroke="#99b" /></S>],
  ["Löschen", <Cross faded />], null,
  ...[0, 1, 2, 3, 4].map((v) => [`Baum ${v + 1}`, <Tree v={v} />] as [string, React.ReactNode]), null,
  ["Hinzufügen", <S><path d="M5 1.500h6V5h3.500v6H11v3.500H5V11H1.500V5H5z" fill="#e8ffe8" stroke="#1d7a1d" /><path d="M8 4v8M4 8h8" stroke="#2f9a2f" strokeWidth="3" /></S>],
  ["Entfernen", <S faded={false}><rect x="1" y="4.500" width="14" height="8" fill="#fff" stroke="#1d7a1d" /><rect x="3" y="6.500" width="10" height="4" fill="#0a8a0a" /></S>],
];

const CaseWindow = () => (
  <Win>
    <WinTitle><WinIcon /><h2>CRM Fallansicht - CRM-Fall: 576</h2><Spacer /><CaptionButtons noMin /></WinTitle>
    <CaseBody>
      <CaseMain>
        <CaseCard>
          <Bar><h1>Belegprüfung</h1><Plain>Fall 576</Plain></Bar>
          <Section>
            <Facts>
              <Headline><CaseLink href="#rechnung" $size={16}>Rechnung 202641238 Fonwerk.PDF.xml</CaseLink></Headline>
              <FactRow><div>Konto:</div><Account><CaseLink href="#konto">70020</CaseLink>Fonwerk AG<br />Friedrich-Stoltze-Platz 32<br />60311 Frankfurt</Account><Status>Status<Ball /></Status></FactRow>
              <Gap />
              <FactRow><div>Belegdatum:</div><div>13.04.2026</div></FactRow>
              <FactRow><div>Belegnummer:</div><div>202641238</div></FactRow>
              <FactRow><div>Gesamtbetrag (brutto):</div><Amount $size={16}>1.791,21</Amount></FactRow>
              <FactRow $small><div>Gesamtbetrag (netto):</div><Amount $size={13}>1.505,22</Amount></FactRow>
            </Facts>
            <Tile><Scanner /></Tile>
          </Section>
          <Bar><h3>Buchungsdaten</h3></Bar>
          <Booking>
            <div>Sollkonto::</div><div><CaseLink href="#soll">4920</CaseLink></div><div>Steuerzeile:</div><div>007</div><div />
            <div>Habenkonto:</div><div>70020</div><div>Steuerbetrag:</div><Num>285,99</Num><div />
            <div>Buchungstext:</div><div /><div>Kostenart:</div><div>4900</div>
          </Booking>
          <Bar><span>30.9.2026 07:57:31</span><span>Arthur Administrator</span><span>In Bearbeitung (Buchung)</span></Bar>
        </CaseCard>
        <Files>
          {files.map((f) => <FileRow key={f.name}><Books /><CaseLink href="#datei" $size={f.size}>{f.name}</CaseLink><button aria-label="Anhang"><SmallClip /></button></FileRow>)}
        </Files>
        <Actions>
          <Action><Tick /><span>In Prüfung<br />(Buchung)</span></Action>
          <Action><Cross /><span>Import abbrechen<br />(Buchung)</span></Action>
        </Actions>
      </CaseMain>
      <CaseScroll><Thumb /></CaseScroll>
    </CaseBody>
    <SizeGrip inset={6} />
  </Win>
);

const E = () => <Euro>€</Euro>;

const Invoice = () => (
  <Sheet>
    <SheetTop>
      <DocTabs>
        <DocTab $on>Beleg</DocTab>
        <DocTab>Analyse <svg width="10" height="11" viewBox="0 0 10 11" aria-hidden="true"><path d="M.5 6.500l2-.7L4 8 8.500.5h1L4.500 10.500H3z" fill="#0a8a0a" /></svg></DocTab>
        <DocTab>Anlagen (4)</DocTab>
        <DocTab>Detailansicht</DocTab>
      </DocTabs>
      <PrintButton aria-label="Drucken"><DocPrinter /></PrintButton>
    </SheetTop>
    <DocTitle>Eingangsrechnung</DocTitle>
    <Two>
      <Parties>
        <Party open>
          <summary><svg width="8" height="7" aria-hidden="true"><path d="M0 0h8L4 7z" /></svg>Ersteller</summary>
          <PartyName>Fonwerk AG</PartyName>
          <address>Friedrich-Stoltze-Platz 32<br />DE - 60311 Frankfurt</address>
          <p>USt-ID: DE122299999<br />St.-Nr.: 12/345/67890</p>
          <p>Heike Kamenz • Peter Behrens • Dirk Christiansen<br /><a href="mailto:info@fonwerk.de">info@fonwerk.de</a></p>
        </Party>
        <Party open>
          <summary><svg width="8" height="7" aria-hidden="true"><path d="M0 0h8L4 7z" /></svg>Empfänger</summary>
          <PartyName>Toys &amp; Bikes GmbH</PartyName>
          <address>Stresemannstraße 25<br />DE - 28207 Bremen</address>
        </Party>
      </Parties>
      <Box>
        <Under>Belegdaten</Under>
        {data.map(([k, v]) => <Pair key={k}><span>{k}</span><b>{v}</b></Pair>)}
      </Box>
    </Two>
    <Items>
      <colgroup>{cols.map((w, i) => <Col key={i} $w={w} />)}</colgroup>
      <thead><tr><th>Pos.</th><th>Artikel</th><th>Bezeichnung</th><th>Menge</th><th>USt. <small>(%)</small></th><th>Einzelpreis <small>(€)</small></th><th>Zu-/Abschlag</th><th>Betrag <small>(€)</small></th></tr></thead>
      <tbody>
        <tr><td>1</td><td>AP</td><td>Anfahrtspauschale</td><td>1</td><td>19,00</td><td>90,00</td><td>---</td><td>90,00</td></tr>
        <tr><td>2</td><td>GF1000</td><td><Narrow>Glasfaseranschluss mit Expresszuschlag (Produktionsgebäude)</Narrow></td><td>1</td><td>19,00</td><td>861,68</td><td>2,50 <small>%</small></td><td>883,22</td></tr>
        <tr><td>3</td><td>M1</td><td>Montage</td><td>3,5</td><td>19,00</td><td>160,00</td><td>---</td><td>560,00</td></tr>
      </tbody>
    </Items>
    <Totals>
      <Rule $b={7} />
      <Pair $h={24}><span>Summenrabatt</span><span>-28,00 <E /></span></Pair>
      <Pair $h={24} $bold><span>Nettobetrag</span><span>1.505,22 <E /></span></Pair>
      <Pair $h={24}><span>19,00% USt. (Basis: 1.505,22 <E />)</span><span>285,99 <E /></span></Pair>
      <Rule $t={5} $b={9} />
      <Pair $h={24} $bold $size={14}><span>Gesamtbetrag</span><span>1.791,21 <E /></span></Pair>
    </Totals>
    <Two>
      <Box><h4>Zahlungsbedingungen</h4></Box>
      <Box><h4>Zahlungsanweisungen</h4></Box>
    </Two>
  </Sheet>
);

const DocWindow = () => (
  <Win $active>
    <WinTitle $active><WinIcon /><h2>(AUTO).500M.11.30092026075730RECHNUNG 202641238 FONWERK.PDF.XML</h2><Spacer /><CaptionButtons active /></WinTitle>
    <Toolbar>{toolbar.map((t, i) => (t ? <TB key={i} aria-label={t[0]}>{t[1]}</TB> : <Sep key={i} />))}</Toolbar>
    <Viewer>
      <Page><Invoice /></Page>
      <Scroller>
        <svg width="9" height="8"><path d="M0 7L3.500 1h2L9 7v1H0z" fill="currentColor" /></svg>
        <Track><TrackThumb /></Track>
        <svg width="9" height="8"><path d="M0 1L3.500 7h2L9 1V0H0z" fill="currentColor" /></svg>
      </Scroller>
    </Viewer>
    <SizeGrip inset={2} />
  </Win>
);

export default function App() {
  return (
    <Shell>
      <Global />
      <Defs />
      <Frame>
        <TitleBar>
          <Quick>
            <QuickButton $wide aria-label="CWL"><AppLogo /></QuickButton>
            <QuickButton aria-label="Mesonic"><CheckerLogo /></QuickButton>
            <QuickButton aria-label="Speichern" $on><SaveDoc /></QuickButton>
            <QuickButton aria-label="Drucken"><SaveDoc print /></QuickButton>
            <QuickButton aria-label="Anpassen"><svg width="9" height="7"><path d="M1 .5h6M1 3h6L4 6z" fill="#777" stroke="#777" strokeWidth=".8" /></svg></QuickButton>
          </Quick>
          <AppTitle>500M / 2026 - CWL Start</AppTitle>
          <CaptionButtons />
        </TitleBar>
        <TabRow>
          <RibbonTab $w={57} $tone="file">CWL</RibbonTab>
          <RibbonTab $w={91}>MESONIC</RibbonTab>
          <RibbonTab $w={166}>INFO CENTER UND MAKROS</RibbonTab>
          <RibbonTab $w={209}>TEXTFORMATIERUNG UND TOOLS</RibbonTab>
          <RibbonTab $w={53} $tone="crm">CRM</RibbonTab>
          <RibbonTab $w={211} $tone="active">CRM FALLANSICHT - CRM-FALL: 576</RibbonTab>
          <TabTools><Chevron up /><Help /></TabTools>
        </TabRow>
        <Ribbon>
          {groups.map((g, i) => (
            <Group key={i} $w={g.w}>
              {g.tools.map((t) => (
                <Tool key={t.l1 + t.l2} $w={t.w} $off={t.off} disabled={t.off}>
                  {t.icon}
                  <ToolLabel>
                    <span>{t.key1 ? <><u>{t.l1[0]}</u>{t.l1.slice(1)}</> : t.l1}</span>
                    {t.l2 && <DropLine>{t.l2}{t.drop && <Chevron />}</DropLine>}
                  </ToolLabel>
                </Tool>
              ))}
            </Group>
          ))}
          <VcrGroup>
            <span>Navigation</span>
            <VcrRow><Vcr kind="first" /><Vcr kind="prev" /><Vcr kind="next" /><Vcr kind="last" /></VcrRow>
            <VcrTitle>VCR</VcrTitle>
          </VcrGroup>
        </Ribbon>
        <MenuBar>
          <Grip>⋮</Grip>
          {menus.map(([m, w]) => <MenuItem key={m} $w={w}>{m}</MenuItem>)}
          <Search><input aria-label="Menüpunktsuche" placeholder="Menüpunktsuche / MesoNavi (UMSCH F1)" /><Chevron /></Search>
        </MenuBar>
        <MdiOuter>
          <Mdi>
            <CaseWindow />
            <DocWindow />
          </Mdi>
        </MdiOuter>
      </Frame>
    </Shell>
  );
}
